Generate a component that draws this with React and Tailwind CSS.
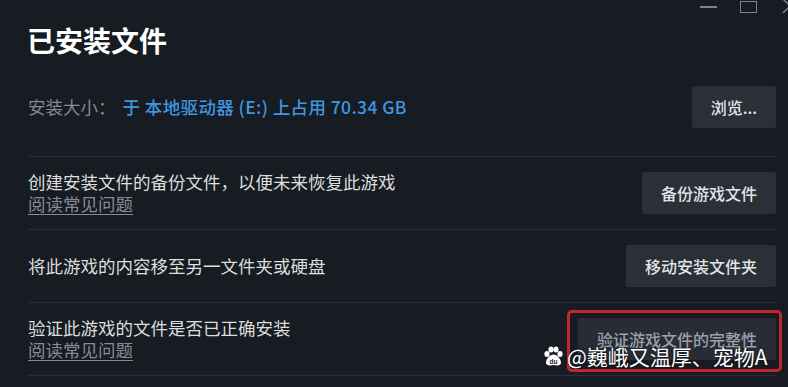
import React from "react";

const FONT = { fontFamily: '"Noto Sans CJK SC", "Noto Sans", sans-serif' };

function Paw() {
  return (
    <svg width="21" height="21" viewBox="0 0 21 21">
      <ellipse cx="4" cy="8" rx="2.6" ry="3" fill="#fff" />
      <ellipse cx="8" cy="3.6" rx="2.6" ry="3" fill="#fff" />
      <ellipse cx="13" cy="3.6" rx="2.6" ry="3" fill="#fff" />
      <ellipse cx="17" cy="8" rx="2.6" ry="3" fill="#fff" />
      <path d="M10.5 8.5 C7 8.5 3 13 3 16.5 C3 19.5 6 20 10.5 19 C15 20 18 19.5 18 16.5 C18 13 14 8.5 10.5 8.5 Z" fill="#fff" />
      <text x="10.5" y="17.5" textAnchor="middle" fontSize="6.5" fontWeight="700" fill="#222" fontFamily="Liberation Sans, sans-serif">du</text>
    </svg>
  );
}

function Btn({ children, dim }) {
  return (
    <button
      className={
        dim
          ? "h-[42px] px-[19px] bg-[#272c36] rounded-[2px] text-[16px] font-medium text-[#9aa1a9] whitespace-nowrap"
          : "h-[42px] px-[19px] bg-[#2a2f38] rounded-[2px] text-[16px] font-medium text-[#e2e4e6] whitespace-nowrap"
      }
    >
      {children}
    </button>
  );
}

export default function App() {
  return (
    <div
      className="relative w-[788px] h-[387px] overflow-hidden bg-[#171b22]"
      style={FONT}
    >
      {/* window chrome */}
      <div className="absolute top-0 left-[700px] flex items-start">
        <div className="mt-[6px] w-[17px] h-[1.5px] bg-[#7d838b]" />
        <div className="ml-[23px] mt-[1px] w-[17px] h-[12px] border-[1.5px] border-[#7d838b]" />
        <svg className="ml-[25px] -mt-[2px]" width="16" height="16" viewBox="0 0 16 16">
          <path d="M1 1 L15 15 M15 1 L1 15" stroke="#7d838b" strokeWidth="1.5" />
        </svg>
      </div>

      <div className="pl-[28px] pr-[12px] pt-[22px]">
        <h1 className="text-[28px] leading-[36px] font-bold text-white -ml-[1px]">已安装文件</h1>

        <div className="mt-[28px] mb-[28px] flex items-center justify-between">
          <div className="flex items-center text-[17.5px]">
            <span className="text-[#858b94]">安装大小：</span>
            <span className="ml-[7px] font-medium tracking-[0.4px] text-[#3f96e0]">于 本地驱动器 (E:) 上占用 70.34 GB</span>
          </div>
          <Btn>浏览...</Btn>
        </div>

        <div className="border-t border-b border-[#2a2e36] divide-y divide-[#2a2e36]">
          <div className="h-[73px] flex items-center justify-between">
            <div className="text-[17.5px] leading-[22.5px]">
              <div className="text-[#dcdedf]">创建安装文件的备份文件，以便未来恢复此游戏</div>
              <a className="text-[#868c95] underline underline-offset-[3px]">阅读常见问题</a>
            </div>
            <Btn>备份游戏文件</Btn>
          </div>
          <div className="h-[73px] flex items-center justify-between">
            <div className="text-[17.5px] leading-[22.5px] text-[#dcdedf]">
              将此游戏的内容移至另一文件夹或硬盘
            </div>
            <Btn>移动安装文件夹</Btn>
          </div>
          <div className="h-[72px] flex items-center justify-between">
            <div className="text-[17.5px] leading-[22.5px]">
              <div className="text-[#dcdedf]">验证此游戏的文件是否已正确安装</div>
              <a className="text-[#868c95] underline underline-offset-[3px]">阅读常见问题</a>
            </div>
            <div className="relative">
              <Btn dim>验证游戏文件的完整性</Btn>
              <div className="absolute -left-[11px] -top-[8px] -right-[6px] -bottom-[12px] border-[3px] border-[#c1272d] rounded-[5px]" />
            </div>
          </div>
        </div>
      </div>

      {/* watermark */}
      <div className="absolute left-[543px] top-[342px] flex items-center gap-[3px]">
        <Paw />
        <span
          className="text-[21px] leading-[28px] text-white"
          style={{ textShadow: "0 0 2px rgba(0,0,0,0.8)" }}
        >
          @巍峨又温厚、宠物A
        </span>
      </div>
    </div>
  );
}
